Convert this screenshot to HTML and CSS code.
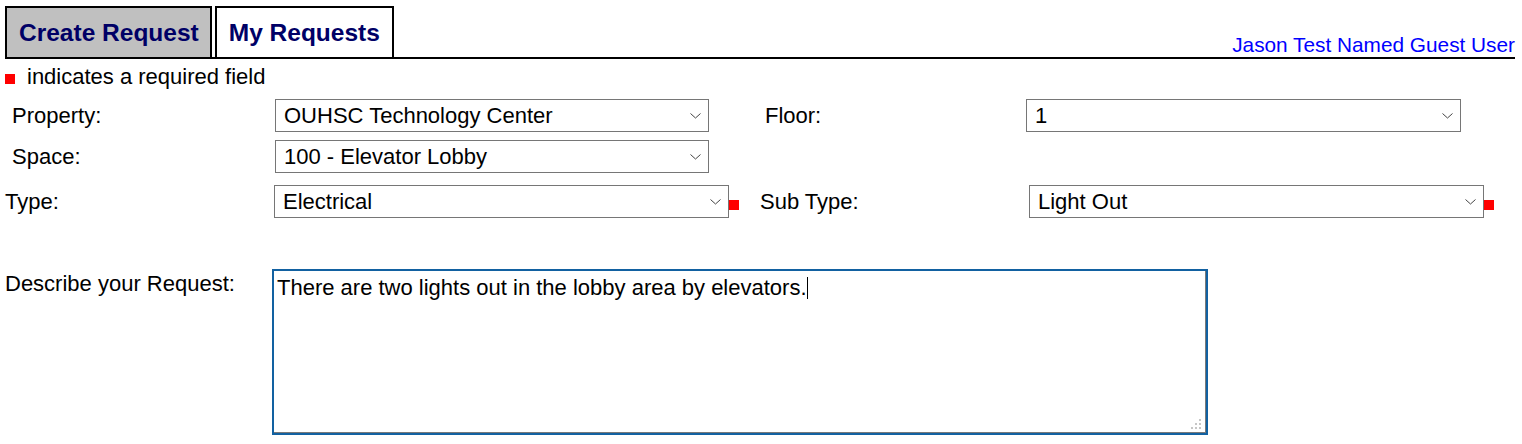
FILE: index.html
```html
<!DOCTYPE html>
<html lang="en">
<head>
<meta charset="utf-8">
<title>Create Request</title>
<link rel="stylesheet" href="styles.css">
</head>
<body>
<div class="page">
  <div class="header">
    <div class="tab tab-active">Create Request</div>
    <div class="tab">My Requests</div>
    <a class="user" href="#">Jason Test Named Guest User</a>
  </div>

  <div class="legend"><span class="req req-legend"></span>indicates a required field</div>

  <div class="row row-first">
    <label class="lbl lbl-loc">Property:</label>
    <span class="sel sel-loc">
      <select><option>OUHSC Technology Center</option></select>
      <svg class="chev" width="11" height="6" viewBox="0 0 11 6"><path d="M0.5 0.5 L5.5 5 L10.5 0.5" fill="none" stroke="#444" stroke-width="1"/></svg>
    </span>
    <label class="lbl lbl-floor">Floor:</label>
    <span class="sel sel-floor">
      <select><option>1</option></select>
      <svg class="chev" width="11" height="6" viewBox="0 0 11 6"><path d="M0.5 0.5 L5.5 5 L10.5 0.5" fill="none" stroke="#444" stroke-width="1"/></svg>
    </span>
  </div>

  <div class="row row-second">
    <label class="lbl lbl-loc">Space:</label>
    <span class="sel sel-loc">
      <select><option>100 - Elevator Lobby</option></select>
      <svg class="chev" width="11" height="6" viewBox="0 0 11 6"><path d="M0.5 0.5 L5.5 5 L10.5 0.5" fill="none" stroke="#444" stroke-width="1"/></svg>
    </span>
  </div>

  <div class="row row-type">
    <label class="lbl lbl-type">Type:</label>
    <span class="sel sel-type">
      <select><option>Electrical</option></select>
      <svg class="chev" width="11" height="6" viewBox="0 0 11 6"><path d="M0.5 0.5 L5.5 5 L10.5 0.5" fill="none" stroke="#444" stroke-width="1"/></svg>
    </span>
    <span class="req req-field"></span>
    <label class="lbl lbl-sub">Sub Type:</label>
    <span class="sel sel-type">
      <select><option>Light Out</option></select>
      <svg class="chev" width="11" height="6" viewBox="0 0 11 6"><path d="M0.5 0.5 L5.5 5 L10.5 0.5" fill="none" stroke="#444" stroke-width="1"/></svg>
    </span>
    <span class="req req-field"></span>
  </div>

  <div class="row row-desc">
    <label class="lbl lbl-desc">Describe your Request:</label>
    <div class="textbox" role="textbox" aria-multiline="true">There are two lights out in the lobby area by elevators.<span class="caret"></span>
      <svg class="grip" width="10" height="10" viewBox="0 0 10 10">
        <rect x="8" y="0" width="2" height="2" fill="#c6c6c6"/>
        <rect x="4" y="4" width="2" height="2" fill="#c6c6c6"/>
        <rect x="8" y="4" width="2" height="2" fill="#c6c6c6"/>
        <rect x="0" y="8" width="2" height="2" fill="#c6c6c6"/>
        <rect x="4" y="8" width="2" height="2" fill="#c6c6c6"/>
        <rect x="8" y="8" width="2" height="2" fill="#c6c6c6"/>
      </svg>
    </div>
  </div>
</div>
</body>
</html>
```

FILE: styles.css
```css
html, body {
  margin: 0;
  padding: 0;
  background: #ffffff;
}

body {
  font-family: "Liberation Sans", Arial, sans-serif;
  font-size: 22px;
  color: #000000;
}

.page {
  padding: 6px 7px 0 5px;
}

/* header with tabs */
.header {
  display: flex;
  align-items: flex-end;
  border-bottom: 2px solid #000000;
}

.tab {
  height: 49px;
  line-height: 50px;
  border: 2px solid #000000;
  border-bottom: none;
  padding: 0 12px;
  font-size: 24.5px;
  font-weight: bold;
  color: #000066;
  background: #ffffff;
  white-space: nowrap;
}

.tab-active {
  background: #c0c0c0;
  padding: 0 11px 0 12px;
  margin-right: 3px;
}

.user {
  margin-left: auto;
  font-size: 20.8px;
  color: #0000ff;
  text-decoration: none;
  line-height: 23px;
  padding-bottom: 1px;
  white-space: nowrap;
}

/* legend */
.legend {
  margin-top: 5px;
  line-height: 25px;
  white-space: nowrap;
}

.req {
  display: inline-block;
  width: 10px;
  height: 10px;
  background: #ff0000;
}

.req-legend {
  margin-right: 12px;
  vertical-align: baseline;
}

/* form rows */
.row {
  display: flex;
  align-items: center;
}

.row-first {
  margin-top: 10px;
  padding-left: 7px;
}

.row-second {
  margin-top: 8px;
  padding-left: 7px;
}

.row-type {
  margin-top: 12px;
}

.row-desc {
  margin-top: 51px;
  align-items: flex-start;
}

.lbl {
  flex: none;
  white-space: nowrap;
}

.lbl-loc {
  width: 263px;
}

.lbl-floor {
  width: 261px;
  margin-left: 56px;
}

.lbl-type {
  width: 269px;
}

.lbl-sub {
  width: 269px;
  margin-left: 21px;
}

.lbl-desc {
  width: 267px;
  line-height: 25px;
  padding-top: 2px;
}

/* selects */
.sel {
  position: relative;
  display: block;
  flex: none;
  height: 33px;
}

.sel select {
  appearance: none;
  -webkit-appearance: none;
  box-sizing: border-box;
  width: 100%;
  height: 33px;
  margin: 0;
  padding: 0 30px 0 8px;
  border: 1px solid #767676;
  border-radius: 0;
  background: #ffffff;
  font-family: "Liberation Sans", Arial, sans-serif;
  font-size: 22px;
  color: #000000;
}

.sel-loc {
  width: 434px;
}

.sel-floor {
  width: 435px;
}

.sel-type {
  width: 455px;
}

.chev {
  position: absolute;
  right: 8px;
  top: 14px;
  pointer-events: none;
}

.req-field {
  flex: none;
  margin-top: 6px;
}

/* textarea lookalike */
.textbox {
  position: relative;
  box-sizing: border-box;
  width: 936px;
  height: 166px;
  border: 2px solid #1261a1;
  box-shadow: inset -1px -1px 0 #7a7a7a;
  padding: 4px 3px 2px 3px;
  line-height: 25px;
  background: #ffffff;
  white-space: pre-wrap;
}

.caret {
  display: inline-block;
  width: 1px;
  height: 22px;
  background: #000000;
  margin-left: 0;
  vertical-align: -4px;
}

.grip {
  position: absolute;
  right: 5px;
  bottom: 4px;
}
```
